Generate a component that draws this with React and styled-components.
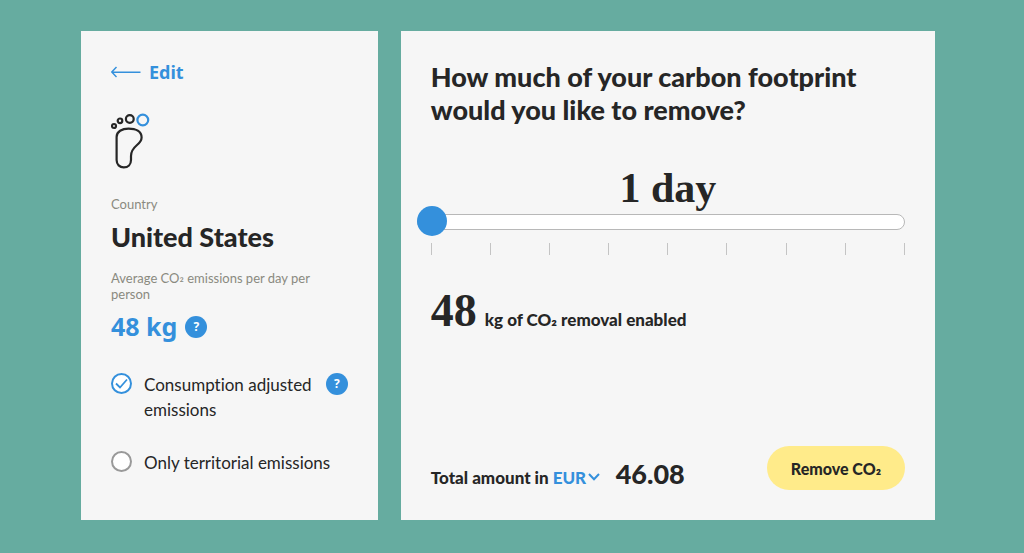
import React, { useState } from "react";
import styled, { createGlobalStyle } from "styled-components";

const TICKS = 9;

export default function App() {
  const [basis, setBasis] = useState("consumption");
  const [days, setDays] = useState(1);
  const [currency, setCurrency] = useState("EUR");

  return (
    <>
      <GlobalStyle />
      <Page>
        <Card>
          <BackLink href="#edit">
            <ArrowIcon />
            Edit
          </BackLink>
          <FootIcon />
          <Caption>Country</Caption>
          <Country>United States</Country>
          <Caption>
            Average CO<Two>₂</Two> emissions per day per person
          </Caption>
          <Emission>
            48 kg
            <HelpButton type="button" aria-label="About average emissions">?</HelpButton>
          </Emission>
          <Options>
            <Option>
              <Radio id="consumption" checked={basis === "consumption"} onChange={setBasis} />
              <OptionLabel htmlFor="consumption">Consumption adjusted emissions</OptionLabel>
              <HelpButton type="button" aria-label="About consumption adjusted emissions">?</HelpButton>
            </Option>
            <Option>
              <Radio id="territorial" checked={basis === "territorial"} onChange={setBasis} />
              <OptionLabel htmlFor="territorial">Only territorial emissions</OptionLabel>
            </Option>
          </Options>
        </Card>
        <Card>
          <Title>How much of your carbon footprint would you like to remove?</Title>
          <Period htmlFor="days">{days === 1 ? "1 day" : `${days} days`}</Period>
          <Slider
            id="days"
            type="range"
            min="1"
            max="365"
            value={days}
            onChange={(e) => setDays(Number(e.target.value))}
          />
          <Ticks>
            {Array.from({ length: TICKS }, (_, i) => (
              <Tick key={i} />
            ))}
          </Ticks>
          <Removal>
            <BigNumber>{48 * days}</BigNumber> kg of CO<Two>₂</Two> removal enabled
          </Removal>
          <Footer>
            <Total>
              <label htmlFor="currency">Total amount in</label>
              <Currency>
                <Select id="currency" value={currency} onChange={(e) => setCurrency(e.target.value)}>
                  <option>EUR</option>
                  <option>USD</option>
                  <option>GBP</option>
                </Select>
                <ChevronIcon />
              </Currency>
              <Amount>{(46.08 * days).toFixed(2)}</Amount>
            </Total>
            <RemoveButton type="button">
              Remove CO<Two>₂</Two>
            </RemoveButton>
          </Footer>
        </Card>
      </Page>
    </>
  );
}

function Radio({ id, checked, onChange }) {
  return (
    <RadioWrapper>
      <RadioInput type="radio" name="basis" id={id} checked={checked} onChange={() => onChange(id)} />
      {checked && (
        <CheckMark viewBox="0 0 21 21" aria-hidden="true">
          <path d="M5 10.5 L9 14.5 L16 6.5" fill="none" stroke="#3490dc" strokeWidth="1.8" />
        </CheckMark>
      )}
    </RadioWrapper>
  );
}

function ArrowIcon() {
  return (
    <svg width="30" height="12" viewBox="0 0 30 12" fill="none" stroke="#3490dc" strokeWidth="1.4" aria-hidden="true">
      <path d="M5.5 1 L0.8 6 L5.5 11 M0.8 6 L29.5 6.3" />
    </svg>
  );
}

function FootIcon() {
  return (
    <Foot viewBox="0 0 40 58" fill="none" stroke="#262626" strokeWidth="2.2" aria-hidden="true">
      <circle cx="3" cy="14" r="2" />
      <circle cx="9" cy="8.8" r="2.3" />
      <circle cx="18.8" cy="7" r="3.9" />
      <circle cx="31.8" cy="8" r="5.4" stroke="#3490dc" />
      <path d="M5.6 25 C5.6 19.5 11 16.6 17.5 16.6 C25 16.6 30.6 19.5 30.6 25.5 C30.6 29 28.5 31 25.5 33.5 C22 36.5 20 39.5 20 44 L20 48 C20 52.5 17 55.4 12.8 55.4 C8.6 55.4 5.6 52.5 5.6 48 Z" />
    </Foot>
  );
}

function ChevronIcon() {
  return (
    <Chevron width="12" height="8" viewBox="0 0 12 8" fill="none" stroke="#3490dc" strokeWidth="2" aria-hidden="true">
      <path d="M1 1 L6 6.2 L11 1" />
    </Chevron>
  );
}

const GlobalStyle = createGlobalStyle`
  * {
    box-sizing: border-box;
  }
  body {
    margin: 0;
    background: #66aca0;
    color: #262626;
    font-family: Lato, "Noto Sans", sans-serif;
    font-size: 17px;
    font-variant-ligatures: none;
  }
`;
const Page = styled.main`
  display: grid;
  grid-template-columns: 5fr 9fr;
  gap: 23px;
  min-height: 100vh;
  padding: 31px 89px 33px 81px;
  @media (max-width: 760px) {
    grid-template-columns: 1fr;
    padding: 24px;
  }
`;
const Card = styled.section`
  display: flex;
  flex-direction: column;
  padding: 29px 30px 30px;
  background: #f6f6f6;
`;
const BackLink = styled.a`
  display: flex;
  align-items: center;
  gap: 8px;
  color: #3490dc;
  font: bold 18px/24px "Noto Sans", sans-serif;
  text-decoration: none;
`;
const Foot = styled.svg`
  width: 40px;
  height: 58px;
  margin: 28px 0 26px;
`;
const Two = styled.span`
  line-height: 0;
  vertical-align: 2px;
`;
const Caption = styled.p`
  margin: 0;
  color: #8a8a80;
  font-size: 13px;
  line-height: 16px;
`;
const Country = styled.h2`
  margin: 8px 0 17px;
  font-size: 27px;
  font-weight: 900;
  line-height: 33px;
`;
const Emission = styled.div`
  display: flex;
  align-items: center;
  gap: 8px;
  margin-top: 8px;
  color: #3490dc;
  font: bold 25px/33px "Noto Sans", sans-serif;
`;
const HelpButton = styled.button`
  flex: none;
  width: 22px;
  height: 22px;
  padding: 0;
  border: 0;
  border-radius: 50%;
  background: #3490dc;
  color: #fff;
  font: bold 12px/22px "Noto Sans", sans-serif;
`;
const Options = styled.div`
  display: grid;
  gap: 28px;
  margin-top: 29px;
`;
const Option = styled.div`
  display: flex;
  align-items: flex-start;
  & > ${HelpButton} {
    margin-top: 1px;
  }
`;
const OptionLabel = styled.label`
  flex: 1;
  margin-left: 12px;
  line-height: 25px;
`;
const RadioWrapper = styled.span`
  position: relative;
  width: 21px;
  height: 21px;
  margin-top: 1px;
`;
const RadioInput = styled.input`
  appearance: none;
  display: block;
  width: 21px;
  height: 21px;
  margin: 0;
  border: 2px solid #999;
  border-radius: 50%;
  background: #fff;
  &:checked {
    border-color: #3490dc;
  }
`;
const CheckMark = styled.svg`
  position: absolute;
  inset: 0;
  pointer-events: none;
`;
const Title = styled.h1`
  margin: 0;
  font-size: 27px;
  font-weight: 900;
  line-height: 33px;
`;
const Period = styled.label`
  margin-top: 40px;
  font: bold 42px/44px "Liberation Serif", serif;
  text-align: center;
`;
const Slider = styled.input`
  appearance: none;
  width: calc(100% + 14px);
  height: 30px;
  margin: -3px 0 0 -14px;
  background: transparent;
  &::-webkit-slider-runnable-track {
    height: 16px;
    border: 1px solid #b8b8b8;
    border-radius: 8px;
    background: #fff;
  }
  &::-webkit-slider-thumb {
    appearance: none;
    width: 30px;
    height: 30px;
    margin: -9px 0 0 -1px;
    border-radius: 50%;
    background: #3490dc;
  }
`;
const Ticks = styled.div`
  display: flex;
  justify-content: space-between;
  margin-top: 6px;
`;
const Tick = styled.span`
  width: 1px;
  height: 12px;
  background: #c4c4c4;
`;
const Removal = styled.p`
  margin: 34px 0 0;
  font-weight: 900;
  line-height: 44px;
`;
const BigNumber = styled.span`
  margin-right: 4px;
  font: bold 46px/44px "Liberation Serif", serif;
`;
const Footer = styled.footer`
  display: flex;
  justify-content: space-between;
  align-items: center;
  margin-top: auto;
`;
const Total = styled.div`
  display: flex;
  align-items: baseline;
  padding-top: 10px;
  font-weight: 900;
`;
const Currency = styled.span`
  display: flex;
  align-items: center;
  margin: 0 16px 0 4px;
`;
const Select = styled.select`
  appearance: none;
  width: 35px;
  padding: 0;
  border: 0;
  background: transparent;
  color: #3490dc;
  font: inherit;
`;
const Chevron = styled.svg`
  pointer-events: none;
`;
const Amount = styled.output`
  font-size: 27px;
  line-height: 33px;
`;
const RemoveButton = styled.button`
  height: 44px;
  padding: 0 24px;
  border: 0;
  border-radius: 22px;
  background: #ffeb8a;
  color: #262626;
  font: inherit;
  font-size: 16px;
  font-weight: 900;
  white-space: nowrap;
`;
